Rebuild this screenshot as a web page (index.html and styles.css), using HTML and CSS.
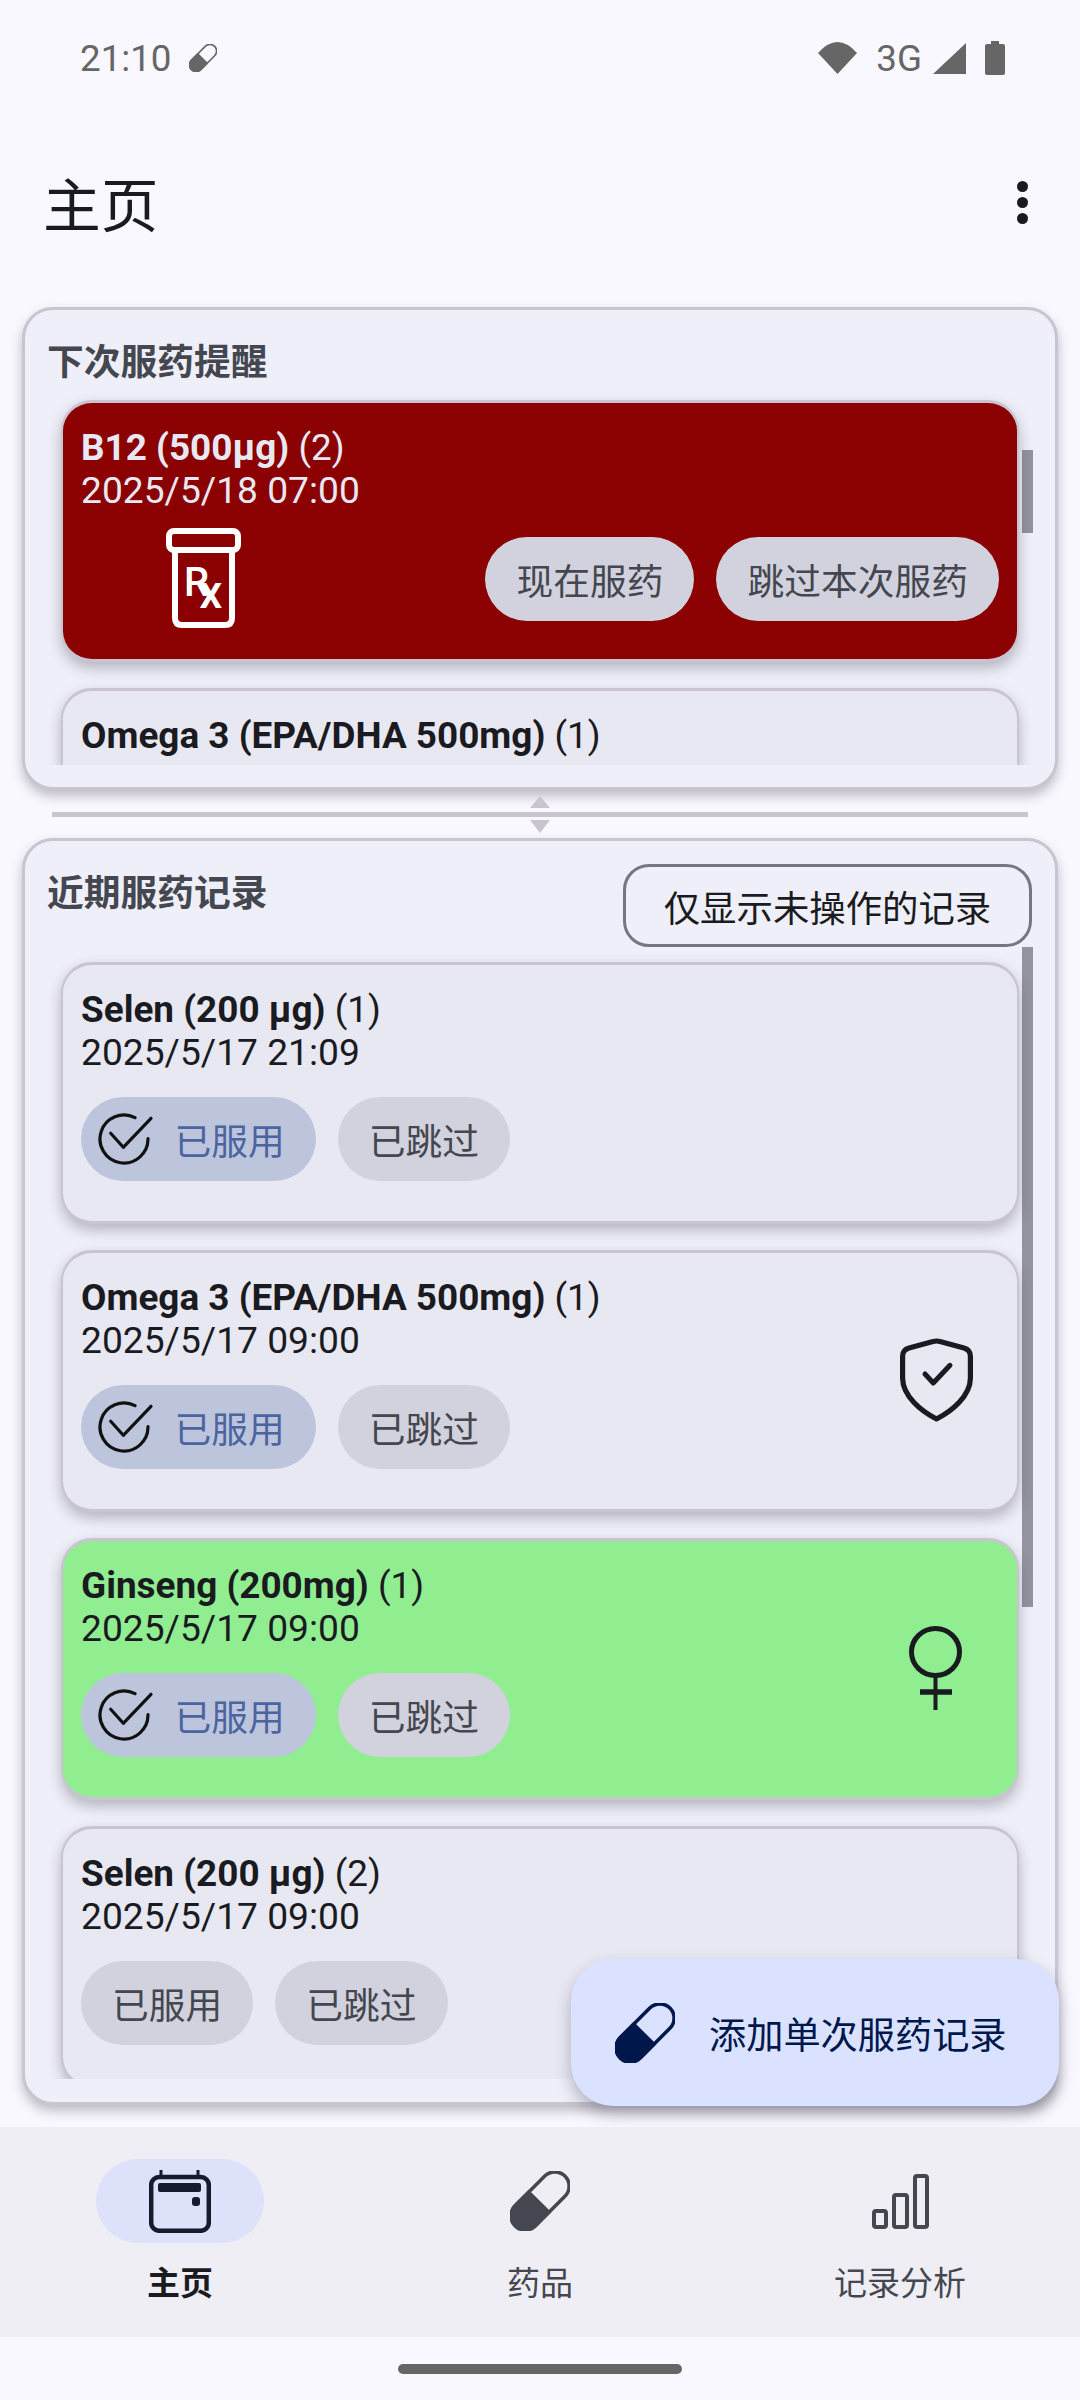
FILE: index.html
```html
<!DOCTYPE html>
<html lang="zh-CN">

<head>
    <meta charset="UTF-8">
    <meta name="viewport" content="width=device-width, initial-scale=1.0">
    <title>主页</title>
    <link rel="stylesheet" href="styles.css">
</head>

<body>
    <svg width="0" height="0" class="defs">
        <defs>
            <g id="pill">
                <g transform="rotate(45 30 30)">
                    <rect x="15.75" y="-5.25" width="28.5" height="70.5" rx="14.25" fill="none" stroke="currentColor" stroke-width="3.5" />
                    <path d="M14 30H46V50A16 16 0 0 1 14 50Z" fill="currentColor" />
                </g>
            </g>
            <g id="check">
                <path d="M37 4.7A24 24 0 1 0 50 25.7" fill="none" stroke="#111" stroke-width="3.2" stroke-linecap="round" />
                <path d="M12.7 20.3L25.3 34.3L53 5.3" fill="none" stroke="#111" stroke-width="3.2" stroke-linecap="round" stroke-linejoin="round" />
            </g>
        </defs>
    </svg>

    <!-- status bar -->
    <div class="status">
        <div class="status-left">
            <span>21:10</span>
            <svg class="status-pill" viewBox="0 0 60 60"><use href="#pill" /></svg>
        </div>
        <div class="status-right">
            <svg class="ic-wifi" viewBox="0 0 39 32"><path d="M19.5 32L0 11Q19.5 -11 39 11Z" fill="#666" /></svg>
            <span>3G</span>
            <svg class="ic-signal" viewBox="0 0 33 31"><path d="M33 0V31H0Z" fill="#666" /></svg>
            <svg class="ic-battery" viewBox="0 0 20 34"><path d="M6 0H14V3H18Q20 3 20 5V32Q20 34 18 34H2Q0 34 0 32V5Q0 3 2 3H6Z" fill="#666" /></svg>
        </div>
    </div>

    <!-- app bar -->
    <div class="appbar">
        <h1>主页</h1>
        <div class="dots"><i></i><i></i><i></i></div>
    </div>

    <!-- next reminders -->
    <section class="panel panel-next">
        <h2>下次服药提醒</h2>
        <div class="list">
            <div class="scrollbar scrollbar-next"></div>
            <div class="card card-red">
                <div class="name"><b>B12 (500µg)</b> (2)</div>
                <div class="time">2025/5/18 07:00</div>
                <div class="due-row">
                    <svg class="ic-rx" viewBox="0 0 75 100">
                        <rect x="3" y="3" width="69" height="19" rx="5" fill="none" stroke="#fff" stroke-width="6" />
                        <path d="M9 22V90Q9 97 16 97H59Q66 97 66 90V22" fill="none" stroke="#fff" stroke-width="6" />
                        <text x="18" y="68" class="rx-text">R<tspan dx="-10" dy="12" class="rx-x">x</tspan></text>
                    </svg>
                    <button class="chip">现在服药</button>
                    <button class="chip">跳过本次服药</button>
                </div>
            </div>
            <div class="card">
                <div class="name"><b>Omega 3 (EPA/DHA 500mg)</b> (1)</div>
            </div>
        </div>
    </section>

    <!-- drag divider -->
    <div class="divider">
        <svg class="tri" viewBox="0 0 20 12"><path d="M10 0L20 12H0Z" fill="#cac4d0" /></svg>
        <div class="divider-line"></div>
        <svg class="tri tri-down" viewBox="0 0 20 13"><path d="M0 0H20L10 13Z" fill="#cac4d0" /></svg>
    </div>

    <!-- recent records -->
    <section class="panel panel-recent">
        <div class="panel-head">
            <h2>近期服药记录</h2>
            <button class="filter">仅显示未操作的记录</button>
        </div>
        <div class="list">
            <div class="scrollbar scrollbar-recent"></div>

            <div class="card">
                <div class="name"><b>Selen (200 µg)</b> (1)</div>
                <div class="time">2025/5/17 21:09</div>
                <div class="chips">
                    <button class="chip chip-on"><svg class="ic-check" viewBox="0 0 56 52"><use href="#check" /></svg>已服用</button>
                    <button class="chip">已跳过</button>
                </div>
            </div>

            <div class="card">
                <div class="name"><b>Omega 3 (EPA/DHA 500mg)</b> (1)</div>
                <div class="time">2025/5/17 09:00</div>
                <div class="chips">
                    <button class="chip chip-on"><svg class="ic-check" viewBox="0 0 56 52"><use href="#check" /></svg>已服用</button>
                    <button class="chip">已跳过</button>
                </div>
                <svg class="tag ic-shield" viewBox="0 0 73 84">
                    <path d="M36.5 3C38 3 39 3.2 40 3.5L64 10Q70.4 12 70.4 18V40C70.4 58 52 73 36.5 81C21 73 2.6 58 2.6 40V18Q2.6 12 9 10L33 3.5C34 3.2 35 3 36.5 3Z" fill="none" stroke="#1a1b21" stroke-width="5.2" stroke-linejoin="round" />
                    <path d="M25 36L33.3 45L50 27.3" fill="none" stroke="#1a1b21" stroke-width="5" stroke-linecap="round" stroke-linejoin="round" />
                </svg>
            </div>

            <div class="card card-green">
                <div class="name"><b>Ginseng (200mg)</b> (1)</div>
                <div class="time">2025/5/17 09:00</div>
                <div class="chips">
                    <button class="chip chip-on"><svg class="ic-check" viewBox="0 0 56 52"><use href="#check" /></svg>已服用</button>
                    <button class="chip">已跳过</button>
                </div>
                <svg class="tag ic-venus" viewBox="0 0 53 84">
                    <ellipse cx="26.5" cy="26" rx="24" ry="23.5" fill="none" stroke="#1a1b21" stroke-width="5" />
                    <path d="M26.5 50V84" stroke="#1a1b21" stroke-width="4" />
                    <path d="M11 66H43" stroke="#1a1b21" stroke-width="5.5" />
                </svg>
            </div>

            <div class="card">
                <div class="name"><b>Selen (200 µg)</b> (2)</div>
                <div class="time">2025/5/17 09:00</div>
                <div class="chips">
                    <button class="chip">已服用</button>
                    <button class="chip">已跳过</button>
                </div>
            </div>
        </div>
    </section>

    <button class="fab">
        <svg class="ic-pill" viewBox="0 0 60 60"><use href="#pill" /></svg>
        添加单次服药记录
    </button>

    <!-- bottom nav -->
    <nav class="nav">
        <div class="nav-item active">
            <div class="nav-icon">
                <svg class="ic-cal" viewBox="0 0 62 63">
                    <path d="M12 0V8M49 0V8" stroke="#161c2e" stroke-width="3" />
                    <rect x="2.2" y="7" width="57.6" height="53.8" rx="8" fill="none" stroke="#161c2e" stroke-width="4.5" />
                    <rect x="9" y="13" width="43" height="9" rx="2" fill="#161c2e" />
                    <rect x="43" y="27" width="8" height="9" rx="3" fill="#161c2e" />
                </svg>
            </div>
            <span>主页</span>
        </div>
        <div class="nav-item">
            <div class="nav-icon">
                <svg class="ic-pill" viewBox="0 0 60 60"><use href="#pill" /></svg>
            </div>
            <span>药品</span>
        </div>
        <div class="nav-item">
            <div class="nav-icon">
                <svg class="ic-chart" viewBox="0 0 57 55">
                    <rect x="2" y="37" width="12" height="16" rx="2" fill="none" stroke="#44474f" stroke-width="4" />
                    <rect x="22" y="21" width="13" height="32" rx="2" fill="none" stroke="#44474f" stroke-width="4" />
                    <rect x="43" y="2" width="12" height="51" rx="2" fill="none" stroke="#44474f" stroke-width="4" />
                </svg>
            </div>
            <span>记录分析</span>
        </div>
    </nav>

    <div class="gesture"><div class="gesture-bar"></div></div>
</body>

</html>
```

FILE: styles.css
```css
/* page */
body {
    margin: 0;
    width: 1080px;
    height: 2400px;
    position: relative;
    overflow: hidden;
    background-color: #faf8ff;
    color: #1a1b21;
    font-family: Roboto, "Noto Sans CJK SC", sans-serif;
    font-size: 36.75px;
}

button {
    font-family: inherit;
    font-size: 36.75px;
    border: none;
    margin: 0;
}

.defs {
    position: absolute;
}

/* status bar */
.status {
    height: 116px;
    padding: 0 75px 0 80px;
    display: flex;
    align-items: center;
    justify-content: space-between;
    color: #666;
}

.status-left,
.status-right {
    display: flex;
    align-items: center;
}

.status-pill {
    width: 28px;
    height: 28px;
    margin-left: 17px;
    color: #666;
}

.ic-wifi {
    width: 39px;
    height: 32px;
    margin-right: 19px;
}

.ic-signal {
    width: 33px;
    height: 31px;
    margin-left: 11px;
}

.ic-battery {
    width: 20px;
    height: 34px;
    margin-left: 19px;
}

/* app bar */
.appbar {
    height: 172px;
    margin-bottom: 19px;
    padding: 0 52px 0 43px;
    display: flex;
    align-items: center;
    justify-content: space-between;
}

.appbar h1 {
    margin: 0;
    font-size: 57.75px;
    font-weight: 400;
}

.dots {
    display: flex;
    flex-direction: column;
    gap: 5px;
}

.dots i {
    width: 11px;
    height: 11px;
    border-radius: 50%;
    background-color: #1a1b21;
}

/* panels */
.panel {
    margin: 0 22px;
    padding: 0 22px;
    box-sizing: border-box;
    border: 3px solid #cac4d0;
    border-radius: 31px;
    background-color: #eeeff8;
    box-shadow: 0 6px 12px rgba(60, 55, 70, 0.32);
    display: flex;
    flex-direction: column;
}

.panel-next {
    height: 483px;
    padding-top: 28px;
}

.panel-recent {
    height: 1267px;
    padding-top: 23px;
}

.panel h2 {
    margin: 0;
    font-size: 36.75px;
    line-height: 50px;
    font-weight: 700;
    color: #44474f;
}

.panel-head {
    height: 83px;
    display: flex;
    justify-content: space-between;
    align-items: flex-start;
}

.panel-head h2 {
    margin-top: 5px;
}

.filter {
    width: 409px;
    height: 83px;
    margin-right: 1px;
    box-sizing: border-box;
    border: 3px solid #74777f;
    border-radius: 26px;
    background-color: transparent;
    color: #1a1b21;
    font-size: 36.4px;
}

.panel-next .list {
    padding-top: 12px;
    height: 377px;
}

.panel-recent .list {
    padding-top: 15px;
    height: 1132px;
}

.list {
    position: relative;
    box-sizing: border-box;
    padding: 0 14px;
    overflow: hidden;
    flex: none;
}

.scrollbar {
    position: absolute;
    right: 0;
    width: 11px;
    background-color: #92939f;
}

.scrollbar-next {
    top: 62px;
    height: 83px;
}

.scrollbar-recent {
    top: 0;
    height: 660px;
}

/* medicine cards */
.card {
    position: relative;
    height: 262px;
    margin-bottom: 26px;
    padding: 23px 18px 0;
    box-sizing: border-box;
    border: solid #cac4d0;
    border-width: 3px 2px;
    border-radius: 31px;
    background-color: #e8e8f3;
    box-shadow: 0 6px 14px rgba(60, 55, 70, 0.32);
    font-size: 37.2px;
    line-height: 43px;
}

.name {
    font-size: 36.9px;
}

.name b {
    font-weight: 700;
}

.card-red {
    background-color: #8b0000;
    color: #e8e8f3;
}

.card-green {
    background-color: #90ee90;
}

.chips {
    display: flex;
    gap: 22px;
    margin-top: 23px;
}

.chip {
    height: 84px;
    padding: 0 31px;
    border-radius: 42px;
    background-color: #d1d2dd;
    color: #44474f;
    display: flex;
    align-items: center;
}

.chips .chip-on {
    padding: 0 31px 0 17px;
    background-color: #bdc5dc;
    color: #4c64a0;
}

.ic-check {
    width: 56px;
    height: 52px;
    margin-right: 20.5px;
}

.due-row {
    display: flex;
    align-items: center;
    gap: 22px;
    margin-top: 2px;
}

.due-row .chip {
    margin-top: 16px;
}

.ic-rx {
    width: 75px;
    height: 100px;
    margin: 14px auto 0 85px;
}

.rx-text {
    font-family: Roboto, sans-serif;
    font-size: 40px;
    font-weight: 500;
    fill: #fff;
}

.rx-x {
    font-size: 46px;
}

.tag {
    position: absolute;
}

.ic-shield {
    width: 73px;
    height: 84px;
    right: 44px;
    top: 85px;
}

.ic-venus {
    width: 53px;
    height: 84px;
    right: 55px;
    top: 85px;
}

/* floating button */
.fab {
    position: absolute;
    left: 571px;
    top: 1959px;
    width: 488px;
    height: 147px;
    padding: 0 0 0 44px;
    border-radius: 42px;
    background-color: #dae2ff;
    color: #00174b;
    font-size: 37.2px;
    box-shadow: 0 8px 16px rgba(40, 40, 60, 0.3);
    display: flex;
    align-items: center;
    gap: 34px;
}

.ic-pill {
    width: 60px;
    height: 60px;
}

/* drag divider */
.divider {
    height: 48px;
    box-sizing: border-box;
    padding-top: 6px;
    display: flex;
    flex-direction: column;
    align-items: center;
}

.tri {
    width: 20px;
    height: 12px;
}

.tri-down {
    height: 13px;
    margin-top: 3px;
}

.divider-line {
    width: 976px;
    height: 5px;
    margin-top: 4px;
    background-color: #cac4d0;
}

/* bottom nav */
.nav {
    position: relative;
    z-index: 2;
    height: 210px;
    margin-top: 22px;
    background-color: #efeef4;
    display: flex;
}

.nav-item {
    flex: 1;
    display: flex;
    flex-direction: column;
    align-items: center;
    padding-top: 32px;
    color: #44474f;
    font-size: 33px;
    line-height: 42px;
}

.nav-icon {
    width: 168px;
    height: 84px;
    margin-bottom: 20px;
    border-radius: 42px;
    display: flex;
    align-items: center;
    justify-content: center;
}

.nav-item.active {
    color: #1a1b21;
    font-weight: 700;
}

.active .nav-icon {
    background-color: #dde1f9;
}

.ic-cal {
    width: 62px;
    height: 63px;
}

.ic-chart {
    width: 57px;
    height: 55px;
}

/* gesture bar */
.gesture {
    height: 63px;
    display: flex;
    align-items: center;
    justify-content: center;
}

.gesture-bar {
    width: 284px;
    height: 10px;
    border-radius: 5px;
    background-color: #666;
}
```
